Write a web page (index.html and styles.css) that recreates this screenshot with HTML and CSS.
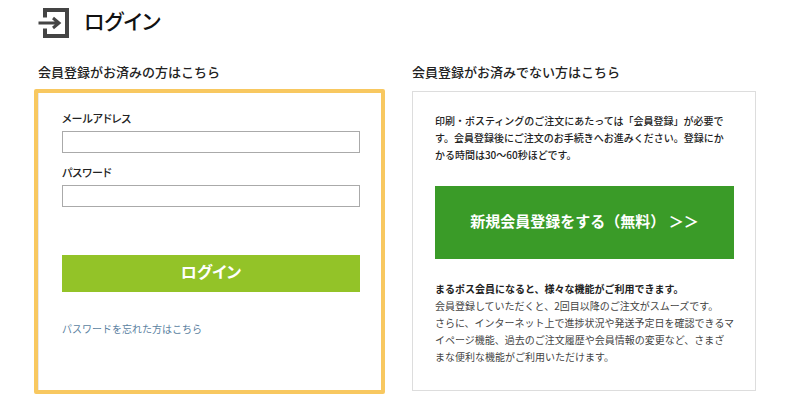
FILE: index.html
```html
<!DOCTYPE html>
<html lang="ja">
<head>
    <meta charset="UTF-8">
    <meta name="viewport" content="width=device-width, initial-scale=1.0">
    <title>ログイン</title>
    <link rel="stylesheet" href="styles.css">
</head>
<body>

<header class="page-header">
    <svg class="login-icon" viewBox="0 0 31 30" aria-hidden="true">
        <path d="M7 9.500V2H29V28H7V20.500" fill="none" stroke="#444" stroke-width="4"/>
        <path d="M0.500 15H21M15 10L21 15L15 20" fill="none" stroke="#444" stroke-width="3"/>
    </svg>
    <h1>ログイン</h1>
</header>

<main class="columns">
    <section class="column">
        <h2>会員登録がお済みの方はこちら</h2>
        <form class="card card-active">
            <label for="email">メールアドレス</label>
            <input type="email" id="email" name="email">
            <label for="password">パスワード</label>
            <input type="password" id="password" name="password">
            <button type="submit" class="login-button">ログイン</button>
            <a href="#" class="forgot-link">パスワードを忘れた方はこちら</a>
        </form>
    </section>

    <section class="column">
        <h2>会員登録がお済みでない方はこちら</h2>
        <div class="card">
            <p class="lead">印刷・ポスティングのご注文にあたっては「会員登録」が必要で<br>す。会員登録後にご注文のお手続きへお進みください。登録にか<br>かる時間は30～60秒ほどです。</p>
            <button type="button" class="register-button">新規会員登録をする（無料） ＞＞</button>
            <p class="note"><strong>まるポス会員になると、様々な機能がご利用できます。</strong><br>会員登録していただくと、2回目以降のご注文がスムーズです。<br>さらに、インターネット上で進捗状況や発送予定日を確認できるマ<br>イページ機能、過去のご注文履歴や会員情報の変更など、さまざ<br>まな便利な機能がご利用いただけます。</p>
        </div>
    </section>
</main>

</body>
</html>
```

FILE: styles.css
```css
* {
    box-sizing: border-box;
}

body {
    margin: 0;
    padding: 7px 44px 8px 38px;
    background-color: #fff;
    color: #222;
    font-family: "Noto Sans CJK JP", sans-serif;
    font-size: 10px;
    line-height: 17px;
}

h1,
h2,
p {
    margin: 0;
}

.page-header {
    display: flex;
    align-items: center;
    gap: 15px;
    height: 32px;
}

.login-icon {
    width: 31px;
    height: 30px;
}

h1 {
    padding-bottom: 6px;
    font-size: 21px;
    font-weight: 500;
    font-feature-settings: "palt";
    line-height: 30px;
    color: #111;
}

.columns {
    display: grid;
    grid-template-columns: 1fr 1fr;
    gap: 30px;
    margin-top: 23px;
}

.column {
    display: flex;
    flex-direction: column;
}

h2 {
    margin-bottom: 9px;
    font-size: 13px;
    font-weight: 500;
    line-height: 20px;
}

.card {
    position: relative;
    display: flex;
    flex-direction: column;
    flex: 1;
    padding: 20px 21px 25px 22px;
    border: 1px solid #ddd;
}

.card-active {
    padding-top: 18px;
    padding-left: 23px;
    border-color: #e8e8ee;
}

/* highlight frame around the login form */
.card-active::after {
    content: "";
    position: absolute;
    inset: -3px -4px -4px -5px;
    border: 4px solid #f8c860;
    border-radius: 2px;
    pointer-events: none;
}

label {
    margin-bottom: 4px;
    font-size: 11px;
    font-weight: 500;
    font-feature-settings: "palt";
}

input {
    height: 22px;
    margin-bottom: 11px;
    padding: 0 6px;
    border: 1px solid #aaa;
    font: inherit;
}

button {
    width: 100%;
    border: none;
    color: #fff;
    font-family: inherit;
    font-weight: 700;
    cursor: pointer;
}

.login-button {
    height: 37px;
    margin-top: 37px;
    padding: 0 0 5px;
    background-color: #93c328;
    font-size: 16px;
    font-feature-settings: "palt";
}

.forgot-link {
    align-self: flex-start;
    margin-top: 28px;
    color: #5b7f9f;
    text-decoration: none;
}

.lead {
    font-weight: 500;
    white-space: nowrap;
}

.register-button {
    height: 73px;
    margin: 23px 0 21px;
    padding: 0 0 5px;
    background-color: #3a9b28;
    font-size: 15px;
}

.note {
    color: #444;
    white-space: nowrap;
}

.note strong {
    color: #222;
    font-weight: 700;
}
```
